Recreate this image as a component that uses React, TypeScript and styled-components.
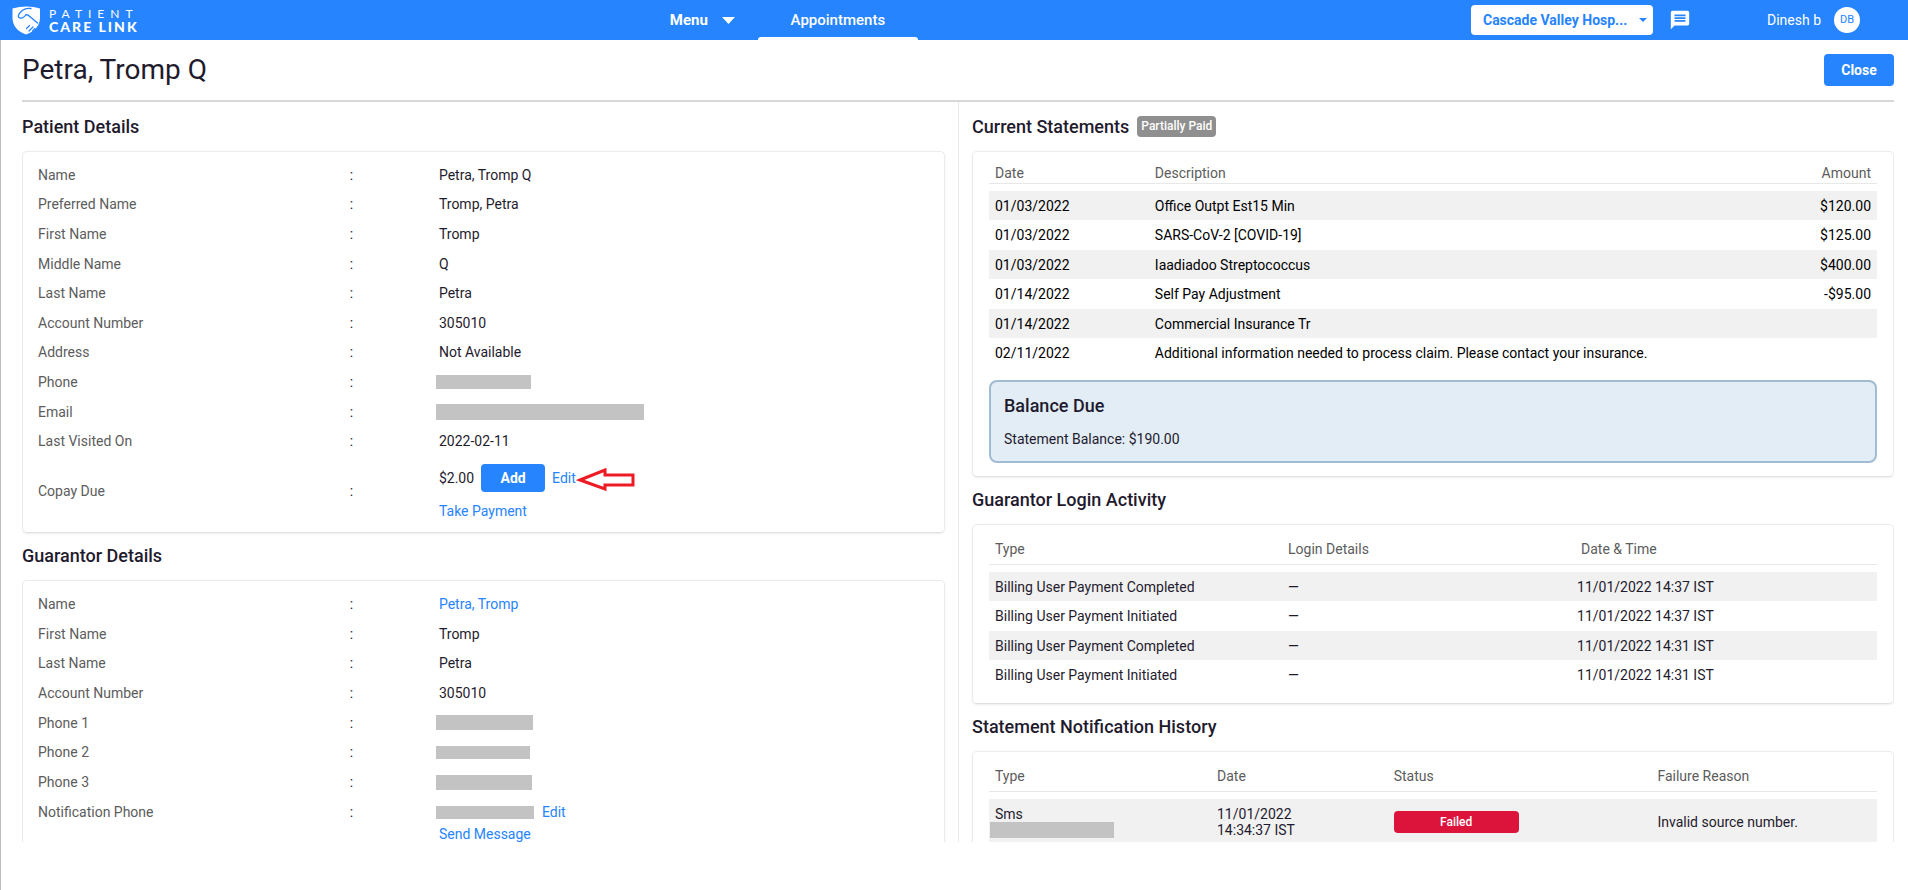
import React from 'react';
import styled, { createGlobalStyle, css } from 'styled-components';
import { MdMessage } from 'react-icons/md';

const blue = '#2684ff';
const ink = '#1f1b2e';
const muted = '#5c5c5c';

const GlobalStyle = createGlobalStyle`
  * { box-sizing: border-box; }
  body {
    margin: 0;
    font-family: Roboto, "Liberation Sans", sans-serif;
    font-size: 14px;
    line-height: 22px;
    color: ${ink};
    background: #fff;
  }
  h1, h2, h3, p, dl, dd { margin: 0; }
  button, select { font-family: inherit; }
`;

const Page = styled.div`
  display: flex;
  flex-direction: column;
  height: 100vh;
`;

/* ---------- top bar ---------- */

const TopBar = styled.header`
  display: grid;
  grid-template-columns: 35% 1fr auto;
  flex: none;
  height: 40px;
  background: ${blue};
  color: #fff;
`;

const Brand = styled.a`
  display: flex;
  align-items: center;
  gap: 8px;
  padding-left: 12px;
  color: #fff;
  text-decoration: none;
`;

const BrandText = styled.span`
  display: flex;
  flex-direction: column;
  font-family: Lato, sans-serif;
`;

const BrandLine = styled.span<{ $strong?: boolean }>`
  font-size: ${(p) => (p.$strong ? 14 : 12)}px;
  font-weight: ${(p) => (p.$strong ? 900 : 400)};
  letter-spacing: ${(p) => (p.$strong ? 2 : 6)}px;
  line-height: 13px;
`;

const Nav = styled.nav`
  display: flex;
  padding-left: 2px;
`;

const MenuButton = styled.button`
  display: flex;
  align-items: center;
  gap: 14px;
  margin-right: 23px;
  padding: 0;
  border: 0;
  background: none;
  color: #fff;
  font-size: 15px;
  font-weight: 700;
`;

const Tab = styled.a`
  display: grid;
  grid-template-rows: 1fr 3px;
  align-items: center;
  width: 160px;
  padding-top: 3px;
  color: #fff;
  font-size: 15px;
  font-weight: 500;
  text-align: center;
  text-decoration: none;

  &::after {
    content: '';
    height: 3px;
    border-radius: 3px 3px 0 0;
    background: #fff;
  }
`;

const Account = styled.div`
  display: flex;
  align-items: center;
  justify-content: flex-end;
  padding-right: 48px;
`;

const SelectBox = styled.label`
  display: flex;
  align-items: center;
  width: 182px;
  height: 30px;
  padding-right: 6px;
  border-radius: 4px;
  background: #fff;
  color: ${blue};
`;

const FacilitySelect = styled.select`
  flex: 1;
  min-width: 0;
  padding: 0 0 0 12px;
  border: 0;
  appearance: none;
  background: none;
  color: inherit;
  font-size: 14px;
  font-weight: 700;
`;

const IconButton = styled.button`
  display: flex;
  margin: 0 76px 0 16px;
  padding: 0;
  border: 0;
  background: none;
  color: #fff;
  font-size: 22px;
`;

const Avatar = styled.span`
  display: flex;
  align-items: center;
  justify-content: center;
  width: 26px;
  height: 26px;
  margin-left: 13px;
  border-radius: 50%;
  background: #fff;
  color: ${blue};
  font-size: 11px;
`;

/* ---------- page frame ---------- */

const Main = styled.main`
  display: flex;
  flex: 1;
  flex-direction: column;
  min-height: 0;
  padding: 0 14px 48px 21px;
  border-left: 1px solid #bdbdbd;
`;

const TitleRow = styled.div`
  display: flex;
  align-items: center;
  justify-content: space-between;
  flex: none;
  height: 62px;
  border-bottom: 2px solid #d8d8d8;
`;

const Title = styled.h1`
  font-size: 28px;
  font-weight: 400;
  line-height: 36px;
`;

const Button = styled.button<{ $size?: 'small' }>`
  border: 0;
  border-radius: 4px;
  background: ${blue};
  color: #fff;
  font-size: 14px;
  font-weight: 700;
  ${(p) =>
    p.$size === 'small'
      ? css`width: 64px; height: 28px;`
      : css`width: 70px; height: 32px;`}
`;

const Columns = styled.div`
  display: grid;
  grid-template-columns: 1fr 1fr;
  flex: 1;
  min-height: 0;
  overflow: hidden;
`;

const Column = styled.div<{ $divided?: boolean }>`
  min-width: 0;
  padding-top: 2px;
  ${(p) =>
    p.$divided
      ? css`border-left: 1px solid #e8e8e8; padding-left: 13px;`
      : css`padding-right: 13px;`}
`;

const SectionHead = styled.div`
  display: flex;
  align-items: center;
  gap: 8px;
  height: 47px;
  padding-bottom: 2px;
`;

const SectionTitle = styled.h2`
  font-size: 18px;
  font-weight: 500;
  line-height: 24px;
`;

const StatusTag = styled.span`
  padding: 0 4px;
  border-radius: 4px;
  background: #8f8f8f;
  color: #fff;
  font-size: 12px;
  font-weight: 500;
  line-height: 21px;
`;

const Card = styled.section`
  border: 1px solid #ebebeb;
  border-bottom-color: #e0e0e0;
  border-radius: 5px;
  box-shadow: 0 1px 2px rgba(0, 0, 0, 0.08);
`;

/* ---------- detail lists ---------- */

const DetailCard = styled(Card)`
  padding: 8px 15px 6px;
`;

const DetailList = styled.dl<{ $height: number }>`
  display: grid;
  grid-auto-rows: 1fr;
  min-height: ${(p) => p.$height}px;
`;

const detailColumns = css`
  display: grid;
  grid-template-columns: 35% 10% 1fr;
`;

const DetailRow = styled.div`
  ${detailColumns}
  align-items: center;
`;

const StackedRow = styled.dl<{ $top?: boolean }>`
  ${detailColumns}
  align-items: ${(p) => (p.$top ? 'start' : 'center')};
  padding: ${(p) => (p.$top ? '4px 0' : '8px 0 4px')};

  > dt, > span {
    padding-bottom: 4px;
  }
`;

const Term = styled.dt`
  color: ${muted};
`;

const Value = styled.dd``;

const Line = styled.div`
  display: flex;
  align-items: center;
`;

const CopayLine = styled(Line)`
  gap: 7px;
  margin-bottom: 8px;
`;

const Link = styled.a`
  color: ${blue};
  text-decoration: none;
`;

const Redacted = styled.span<{ $width: number; $height: number }>`
  display: block;
  width: ${(p) => p.$width}px;
  height: ${(p) => p.$height}px;
  margin-left: -3px;
  background: #c3c3c3;
`;

const RedactedLine = styled(Line)`
  gap: 8px;
`;

const Pointer = styled.svg`
  margin-left: -7px;
`;

/* ---------- tables ---------- */

const TableCard = styled(Card)`
  padding: 8px 16px 13px;
`;

const Table = styled.table`
  width: 100%;
  table-layout: fixed;
  border-collapse: separate;
  border-spacing: 0;

  tbody::before {
    content: '';
    display: block;
    height: 7px;
  }
  tbody tr:nth-child(odd) {
    background: #f1f1f1;
  }
`;

const HeadCell = styled.th<{ $right?: boolean; $tall?: boolean }>`
  height: ${(p) => (p.$tall ? 32 : 24)}px;
  padding: 0 6px;
  border-bottom: 1px solid #e8e8e8;
  color: ${muted};
  font-weight: 400;
  line-height: 20px;
  text-align: ${(p) => (p.$right ? 'right' : 'left')};
  vertical-align: ${(p) => (p.$tall ? 'middle' : 'bottom')};
`;

const Cell = styled.td<{ $right?: boolean; $flush?: boolean }>`
  height: 30px;
  padding: 0 6px;
  ${(p) => p.$flush && css`padding-left: 2px;`}
  text-align: ${(p) => (p.$right ? 'right' : 'left')};

  tr:nth-child(odd) > & {
    height: 29px;
  }
`;

const StatementCell = styled(Cell)`
  color: #000;
`;

const NoticeCell = styled.td`
  height: 46px;
  padding: 0 6px;
  line-height: 16px;
`;

const RedactedUnder = styled(Redacted)`
  margin-left: -5px;
`;

const FailedBadge = styled.span`
  display: block;
  width: 125px;
  border-radius: 4px;
  background: #dc143c;
  color: #fff;
  font-size: 12px;
  font-weight: 500;
  line-height: 22px;
  text-align: center;
`;

const BalanceBox = styled.div`
  margin-top: 12px;
  padding: 12px 13px 11px;
  border: 2px solid #a0bbd2;
  border-radius: 8px;
  background: #e3edf6;
`;

const BalanceTitle = styled.h3`
  margin-bottom: 10px;
  font-size: 18px;
  font-weight: 500;
  line-height: 24px;
`;

/* ---------- data ---------- */

type Detail = { label: string; value: React.ReactNode };

const patient: Detail[] = [
  { label: 'Name', value: 'Petra, Tromp Q' },
  { label: 'Preferred Name', value: 'Tromp, Petra' },
  { label: 'First Name', value: 'Tromp' },
  { label: 'Middle Name', value: 'Q' },
  { label: 'Last Name', value: 'Petra' },
  { label: 'Account Number', value: '305010' },
  { label: 'Address', value: 'Not Available' },
  { label: 'Phone', value: <Redacted $width={95} $height={14} /> },
  { label: 'Email', value: <Redacted $width={208} $height={16} /> },
  { label: 'Last Visited On', value: '2022-02-11' },
];

const guarantor: Detail[] = [
  { label: 'Name', value: <Link href="#guarantor">Petra, Tromp</Link> },
  { label: 'First Name', value: 'Tromp' },
  { label: 'Last Name', value: 'Petra' },
  { label: 'Account Number', value: '305010' },
  { label: 'Phone 1', value: <Redacted $width={97} $height={15} /> },
  { label: 'Phone 2', value: <Redacted $width={94} $height={13} /> },
  { label: 'Phone 3', value: <Redacted $width={96} $height={15} /> },
];

const statements = [
  ['01/03/2022', 'Office Outpt Est15 Min', '$120.00'],
  ['01/03/2022', 'SARS-CoV-2 [COVID-19]', '$125.00'],
  ['01/03/2022', 'Iaadiadoo Streptococcus', '$400.00'],
  ['01/14/2022', 'Self Pay Adjustment', '-$95.00'],
  ['01/14/2022', 'Commercial Insurance Tr', ''],
  ['02/11/2022', 'Additional information needed to process claim. Please contact your insurance.', ''],
];

const logins = [
  ['Billing User Payment Completed', '11/01/2022 14:37 IST'],
  ['Billing User Payment Initiated', '11/01/2022 14:37 IST'],
  ['Billing User Payment Completed', '11/01/2022 14:31 IST'],
  ['Billing User Payment Initiated', '11/01/2022 14:31 IST'],
];

/* ---------- drawings ---------- */

const Shield = () => (
  <svg width="29" height="29" viewBox="0 0 29 29" fill="none" aria-hidden="true">
    <path
      d="M14.5 0.5C10 0.5 5 1.2 0.5 2.5V12C0.5 19.5 5.5 25.5 14 28.5C22.5 25.5 28 19.5 28 12V2.5C24 1.2 19 0.5 14.5 0.5Z"
      fill="#fff"
    />
    <path
      d="M19 2.5C15.500 2 13 2.500 11 4C8.500 6.500 5.500 8.500 6.500 11C8.500 13 12 12 14 8.500C16 8.500 17.500 10 19 11.500L25.500 17"
      stroke={blue}
      strokeWidth="1.3"
      strokeLinecap="round"
      strokeLinejoin="round"
    />
    <path
      d="M14.5 22.5l3-3M17 25l4-4M20.5 25l2.5-2.500"
      stroke={blue}
      strokeWidth="1.2"
      strokeLinecap="round"
    />
  </svg>
);

const Caret = ({ width, height }: { width: number; height: number }) => (
  <svg width={width} height={height} viewBox="0 0 10 5" preserveAspectRatio="none" aria-hidden="true">
    <path d="M0 0h10L5 5z" fill="currentColor" />
  </svg>
);

const Details = ({ items, height }: { items: Detail[]; height: number }) => (
  <DetailList $height={height}>
    {items.map((item) => (
      <DetailRow key={item.label}>
        <Term>{item.label}</Term>
        <span>:</span>
        <Value>{item.value}</Value>
      </DetailRow>
    ))}
  </DetailList>
);

export default function App() {
  return (
    <Page>
      <GlobalStyle />
      <TopBar>
        <Brand href="#home">
          <Shield />
          <BrandText>
            <BrandLine>PATIENT</BrandLine>
            <BrandLine $strong>CARE LINK</BrandLine>
          </BrandText>
        </Brand>
        <Nav>
          <MenuButton type="button">
            Menu
            <Caret width={13} height={7} />
          </MenuButton>
          <Tab href="#appointments">Appointments</Tab>
        </Nav>
        <Account>
          <SelectBox>
            <FacilitySelect aria-label="Facility">
              <option>Cascade Valley Hosp...</option>
            </FacilitySelect>
            <Caret width={8} height={4} />
          </SelectBox>
          <IconButton type="button" aria-label="Messages">
            <MdMessage />
          </IconButton>
          <span>Dinesh b</span>
          <Avatar>DB</Avatar>
        </Account>
      </TopBar>

      <Main>
        <TitleRow>
          <Title>Petra, Tromp Q</Title>
          <Button type="button">Close</Button>
        </TitleRow>

        <Columns>
          <Column>
            <SectionHead>
              <SectionTitle>Patient Details</SectionTitle>
            </SectionHead>
            <DetailCard>
              <Details items={patient} height={296} />
              <StackedRow>
                <Term>Copay Due</Term>
                <span>:</span>
                <Value>
                  <CopayLine>
                    <span>$2.00</span>
                    <Button type="button" $size="small">Add</Button>
                    <Link href="#edit-copay">Edit</Link>
                    <Pointer width="60" height="26" viewBox="0 0 60 26" fill="none" aria-hidden="true">
                      <path
                        d="M4 15L29 5V10H57V20H29V24Z"
                        stroke="#ed1c24"
                        strokeWidth="3"
                      />
                    </Pointer>
                  </CopayLine>
                  <Link href="#payment">Take Payment</Link>
                </Value>
              </StackedRow>
            </DetailCard>

            <SectionHead>
              <SectionTitle>Guarantor Details</SectionTitle>
            </SectionHead>
            <DetailCard>
              <Details items={guarantor} height={208} />
              <StackedRow $top>
                <Term>Notification Phone</Term>
                <span>:</span>
                <Value>
                  <RedactedLine>
                    <Redacted $width={98} $height={13} />
                    <Link href="#edit-phone">Edit</Link>
                  </RedactedLine>
                  <Link href="#message">Send Message</Link>
                </Value>
              </StackedRow>
            </DetailCard>
          </Column>

          <Column $divided>
            <SectionHead>
              <SectionTitle>Current Statements</SectionTitle>
              <StatusTag>Partially Paid</StatusTag>
            </SectionHead>
            <TableCard>
              <Table>
                <colgroup>
                  <col style={{ width: '18%' }} />
                  <col />
                  <col style={{ width: '14%' }} />
                </colgroup>
                <thead>
                  <tr>
                    <HeadCell>Date</HeadCell>
                    <HeadCell>Description</HeadCell>
                    <HeadCell $right>Amount</HeadCell>
                  </tr>
                </thead>
                <tbody>
                  {statements.map(([date, text, amount]) => (
                    <tr key={text}>
                      <StatementCell>{date}</StatementCell>
                      <StatementCell>{text}</StatementCell>
                      <StatementCell $right>{amount}</StatementCell>
                    </tr>
                  ))}
                </tbody>
              </Table>
              <BalanceBox>
                <BalanceTitle>Balance Due</BalanceTitle>
                <p>Statement Balance: $190.00</p>
              </BalanceBox>
            </TableCard>

            <SectionHead>
              <SectionTitle>Guarantor Login Activity</SectionTitle>
            </SectionHead>
            <TableCard>
              <Table>
                <colgroup>
                  <col style={{ width: '33%' }} />
                  <col style={{ width: '33%' }} />
                  <col />
                </colgroup>
                <thead>
                  <tr>
                    <HeadCell $tall>Type</HeadCell>
                    <HeadCell $tall>Login Details</HeadCell>
                    <HeadCell $tall>Date &amp; Time</HeadCell>
                  </tr>
                </thead>
                <tbody>
                  {logins.map(([type, time], i) => (
                    <tr key={i}>
                      <Cell>{type}</Cell>
                      <Cell>—</Cell>
                      <Cell $flush>{time}</Cell>
                    </tr>
                  ))}
                </tbody>
              </Table>
            </TableCard>

            <SectionHead>
              <SectionTitle>Statement Notification History</SectionTitle>
            </SectionHead>
            <TableCard>
              <Table>
                <colgroup>
                  <col style={{ width: '25%' }} />
                  <col style={{ width: '19.9%' }} />
                  <col style={{ width: '29.7%' }} />
                  <col />
                </colgroup>
                <thead>
                  <tr>
                    <HeadCell $tall>Type</HeadCell>
                    <HeadCell $tall>Date</HeadCell>
                    <HeadCell $tall>Status</HeadCell>
                    <HeadCell $tall>Failure Reason</HeadCell>
                  </tr>
                </thead>
                <tbody>
                  <tr>
                    <NoticeCell>
                      Sms
                      <RedactedUnder $width={124} $height={16} />
                    </NoticeCell>
                    <NoticeCell>
                      11/01/2022
                      <br />
                      14:34:37 IST
                    </NoticeCell>
                    <NoticeCell>
                      <FailedBadge>Failed</FailedBadge>
                    </NoticeCell>
                    <NoticeCell>Invalid source number.</NoticeCell>
                  </tr>
                </tbody>
              </Table>
            </TableCard>
          </Column>
        </Columns>
      </Main>
    </Page>
  );
}
